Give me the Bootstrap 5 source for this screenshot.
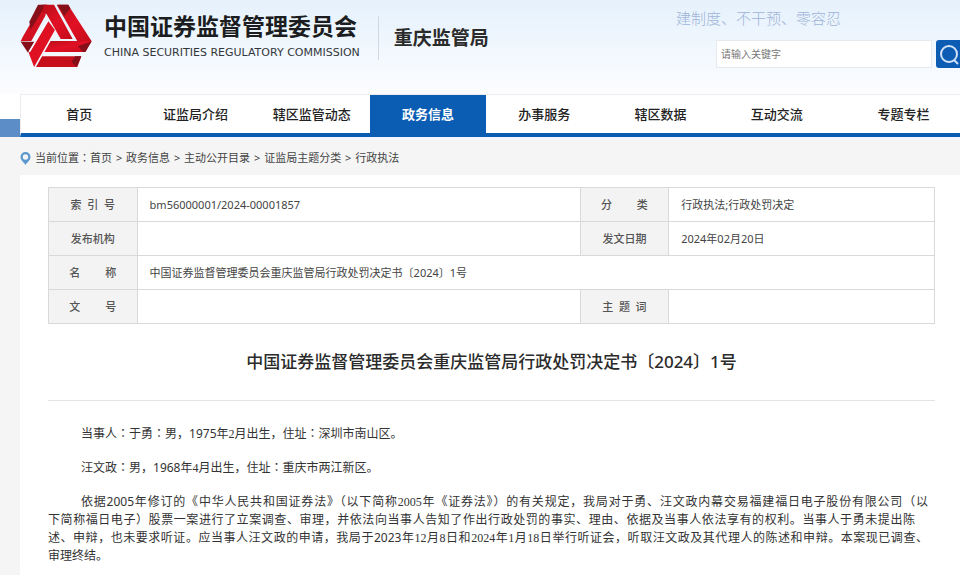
<!DOCTYPE html>
<html lang="zh-CN">
<head>
<meta charset="utf-8">
<meta name="viewport" content="width=device-width, initial-scale=1">
<title>中国证券监督管理委员会重庆监管局</title>
<link rel="stylesheet" href="https://cdn.jsdelivr.net/npm/bootstrap@5.3.0/dist/css/bootstrap.min.css">
<style>
  body { font-family: "Noto Sans", "Noto Sans CJK SC", sans-serif; font-size: 12px; line-height: 18px; color: #444; background: #f5f5f5; overflow-x: hidden; }
  a { color: inherit; text-decoration: none; }
  .site-head { background: linear-gradient(#e5f1fc, #f4f9fe 65%, #fcfcfe); height: 94px; }
  .brand-mark { width: 72px; height: 64px; }
  .brand-name { font-size: 23px; line-height: 28px; font-weight: 700; color: #1b1d20; }
  .brand-en { font-family: "DejaVu Sans", sans-serif; font-size: 11px; line-height: 26px; color: #33373c; }
  .bureau { font-size: 19px; line-height: 44px; font-weight: 700; color: #2b2b2b; border-left: 1px solid #cfd8e2; padding-left: 15px; margin-left: 18px; }
  .slogan { font-size: 15px; line-height: 20px; font-weight: 300; color: #9fb4d8; }
  .search-area { width: 284px; }
  .search-form { width: 244px; margin-top: 12px; }
  .search-box { font-size: 10px; line-height: 24px; height: 28px; border: 1px solid #e6ebf0; padding: 0 4px; }
  .search-box::placeholder { color: #777; }
  .search-btn { width: 24px; height: 28px; background: #0d5cb4; border: 0; border-radius: 3px 0 0 3px; }
  .nav-strip { background: #fff; }
  .nav-tail { width: 20px; height: 18px; background: #5d8dc7; }
  .main-nav { border-top: 1px solid #ececf0; border-bottom: 4px solid #0b5db3; border-left: 1px solid #ececf0; }
  .main-nav a { font-size: 13px; line-height: 38px; font-weight: 500; color: #222; flex: 1 1 0; }
  .main-nav a.current { background: #0b5db3; color: #fff; font-weight: 700; }
  .main-nav a.last-item { flex: 0 0 125px; padding-left: 12px; }
  .crumbs { font-size: 11px; line-height: 34px; border-top: 4px solid #f3f7fb; margin-left: 20px; }
  .crumb-sep { margin: 0 1px; }
  .sheet { margin-left: 20px; background: #fff; padding: 12px 25px 20px 28px; min-height: 400px; }
  .meta-table { table-layout: fixed; font-size: 11px; line-height: 17px; color: #444; border: 1px solid #d9d9d9; margin-bottom: 26px; }
  .meta-table th, .meta-table td { padding: 8px 12px; border: 1px solid #d9d9d9; vertical-align: middle; }
  .meta-table th { background: #f3f3f3; text-align: center; font-weight: 500; color: #555; padding: 8px 0; white-space: nowrap; }
  .col-label { width: 10%; }
  .col-wide { width: 50%; }
  .doc-title { font-size: 17px; line-height: 24px; font-weight: 500; color: #2b2b2b; padding-bottom: 26px; border-bottom: 1px solid #e4e4e4; }
  .doc-text { color: #333; }
  .doc-text p { margin-bottom: 16px; text-indent: 33px; }
  .doc-text .full-line { display: block; text-align-last: justify; padding-right: 7px; }
  .doc-text .short-line { padding-right: 20px; }
  .doc-text .follow { text-indent: 0; }
  .num { font-family: "Liberation Serif", serif; }
  .colon { font-family: "Noto Sans CJK JP", sans-serif; line-height: 1; }
</style>
<script src="https://cdn.jsdelivr.net/npm/bootstrap@5.3.0/dist/js/bootstrap.bundle.min.js"></script>
</head>
<body>
<header class="site-head d-flex align-items-start">
  <a class="d-flex ms-3 ps-1 pt-1 text-nowrap" href="#">
    <svg class="brand-mark" viewBox="6 7 216 192" aria-hidden="true">
      <defs>
        <linearGradient id="redFall" x1="0" y1="0" x2="1" y2="1"><stop offset="0" stop-color="#b50e18"/><stop offset=".5" stop-color="#e21024"/><stop offset="1" stop-color="#c40d1b"/></linearGradient>
      </defs>
      <path fill="#d3101f" d="M70 9H88L82 42L40 118L8 119L14 106Z"/>
      <path fill="#85101a" d="M60 9H84L38 84L34 60Z"/>
      <path fill="url(#redFall)" d="M78 9H108L164 112H128L86 38L72 30Z"/>
      <path fill="url(#redFall)" d="M116 9H150L221 119H178Z"/>
      <path fill="#85101a" d="M120 9H151L157 20L139 42Z"/>
      <path fill="#85101a" d="M8 120H50L30 153Z"/>
      <path fill="url(#redFall)" d="M88 118H221L202 151H70Z"/>
      <path fill="#85101a" d="M221 119L202 151H196L180 134Z"/>
      <path fill="#c70f1c" d="M72 164H190L178 196H48Z"/>
      <path fill="#85101a" d="M190 164H172L160 180L176 196Z"/>
      <path fill="#de1022" d="M90 57L113 88L54 195H48L32 153L38 148Z"/>
      <path fill="none" stroke="#f4f8fd" stroke-width="5" d="M34 150L90 56M113 86L50 198"/>
    </svg>
    <span class="ms-2 ps-1 pt-1">
      <span class="brand-name d-block mt-1">中国证券监督管理委员会</span>
      <span class="brand-en d-block">CHINA SECURITIES REGULATORY COMMISSION</span>
    </span>
  </a>
  <a class="bureau mt-3 text-nowrap" href="#">重庆监管局</a>
  <div class="search-area ms-auto pt-2">
    <div class="slogan text-nowrap">建制度、不干预、零容忍</div>
    <form class="search-form d-flex ms-auto">
      <input class="search-box flex-grow-1 me-1" id="keyword" type="text" placeholder="请输入关键字" aria-label="请输入关键字">
      <button class="search-btn p-0 d-flex" type="button" aria-label="搜索">
        <svg width="24" height="28" viewBox="0 0 24 28" fill="none" stroke="#cfe2f7" stroke-width="2"><circle cx="13" cy="14" r="8"/><path d="M18 20l4 4"/></svg>
      </button>
    </form>
  </div>
</header>

<div class="nav-strip d-flex align-items-end">
  <div class="nav-tail"></div>
  <nav class="main-nav d-flex flex-grow-1 text-center text-nowrap">
    <a href="#">首页</a>
    <a href="#">证监局介绍</a>
    <a href="#">辖区监管动态</a>
    <a class="current" href="#" aria-current="page">政务信息</a>
    <a href="#">办事服务</a>
    <a href="#">辖区数据</a>
    <a href="#">互动交流</a>
    <a class="last-item" href="#">专题专栏</a>
  </nav>
</div>

<div class="crumbs d-flex align-items-center">
  <svg class="me-1" width="11" height="13" viewBox="0 0 11 13" aria-hidden="true"><path fill="#5b97cd" fill-rule="evenodd" d="M5.500 0A5 5 0 0 1 10.500 5C10.500 8 7 10.500 5.500 13C4 10.500 .5 8 .5 5A5 5 0 0 1 5.500 0ZM5.500 2.300A2.700 2.700 0 1 0 5.500 7.700A2.700 2.700 0 1 0 5.500 2.300Z"/></svg>
  <span>当前位置<span class="colon" lang="ja">：</span><a href="#">首页</a> <span class="crumb-sep">&gt;</span> <a href="#">政务信息</a> <span class="crumb-sep">&gt;</span> <a href="#">主动公开目录</a> <span class="crumb-sep">&gt;</span> <a href="#">证监局主题分类</a> <span class="crumb-sep">&gt;</span> <a href="#">行政执法</a></span>
</div>

<main class="sheet">
  <table class="meta-table w-100">
    <colgroup><col class="col-label"><col class="col-wide"><col class="col-label"><col></colgroup>
    <tr><th scope="row">索&nbsp; 引&nbsp; 号</th><td>bm56000001/2024-00001857</td><th scope="row">分&emsp;&emsp; 类</th><td>行政执法;行政处罚决定</td></tr>
    <tr><th scope="row">发布机构</th><td></td><th scope="row">发文日期</th><td>2024年02月20日</td></tr>
    <tr><th scope="row">名&emsp;&emsp; 称</th><td colspan="3">中国证券监督管理委员会重庆监管局行政处罚决定书〔2024〕1号</td></tr>
    <tr><th scope="row">文&emsp;&emsp; 号</th><td></td><th scope="row">主&nbsp; 题&nbsp; 词</th><td></td></tr>
  </table>

  <h1 class="doc-title text-center mb-4">中国证券监督管理委员会重庆监管局行政处罚决定书〔2024〕1号</h1>

  <article class="doc-text">
    <p>当事人<span class="colon" lang="ja">：</span>于勇<span class="colon" lang="ja">：</span>男，1975年<span class="num">2</span>月出生，住址<span class="colon" lang="ja">：</span>深圳市南山区。</p>
    <p>汪文政<span class="colon" lang="ja">：</span>男，1968年<span class="num">4</span>月出生，住址<span class="colon" lang="ja">：</span>重庆市两江新区。</p>
    <p>
      <span class="full-line">依据2005年修订的《中华人民共和国证券法》（以下简称<span class="num">2005</span>年《证券法》）的有关规定，我局对于勇、汪文政内幕交易福建福日电子股份有限公司（以</span>
      <span class="full-line short-line follow">下简称福日电子）股票一案进行了立案调查、审理，并依法向当事人告知了作出行政处罚的事实、理由、依据及当事人依法享有的权利。当事人于勇未提出陈</span>
      <span class="full-line follow">述、申辩，也未要求听证。应当事人汪文政的申请，我局于2023年<span class="num">12</span>月<span class="num">8</span>日和<span class="num">2024</span>年<span class="num">1</span>月<span class="num">18</span>日举行听证会，听取汪文政及其代理人的陈述和申辩。本案现已调查、</span>
      <span class="d-block follow">审理终结。</span>
    </p>
  </article>
</main>
</body>
</html>
